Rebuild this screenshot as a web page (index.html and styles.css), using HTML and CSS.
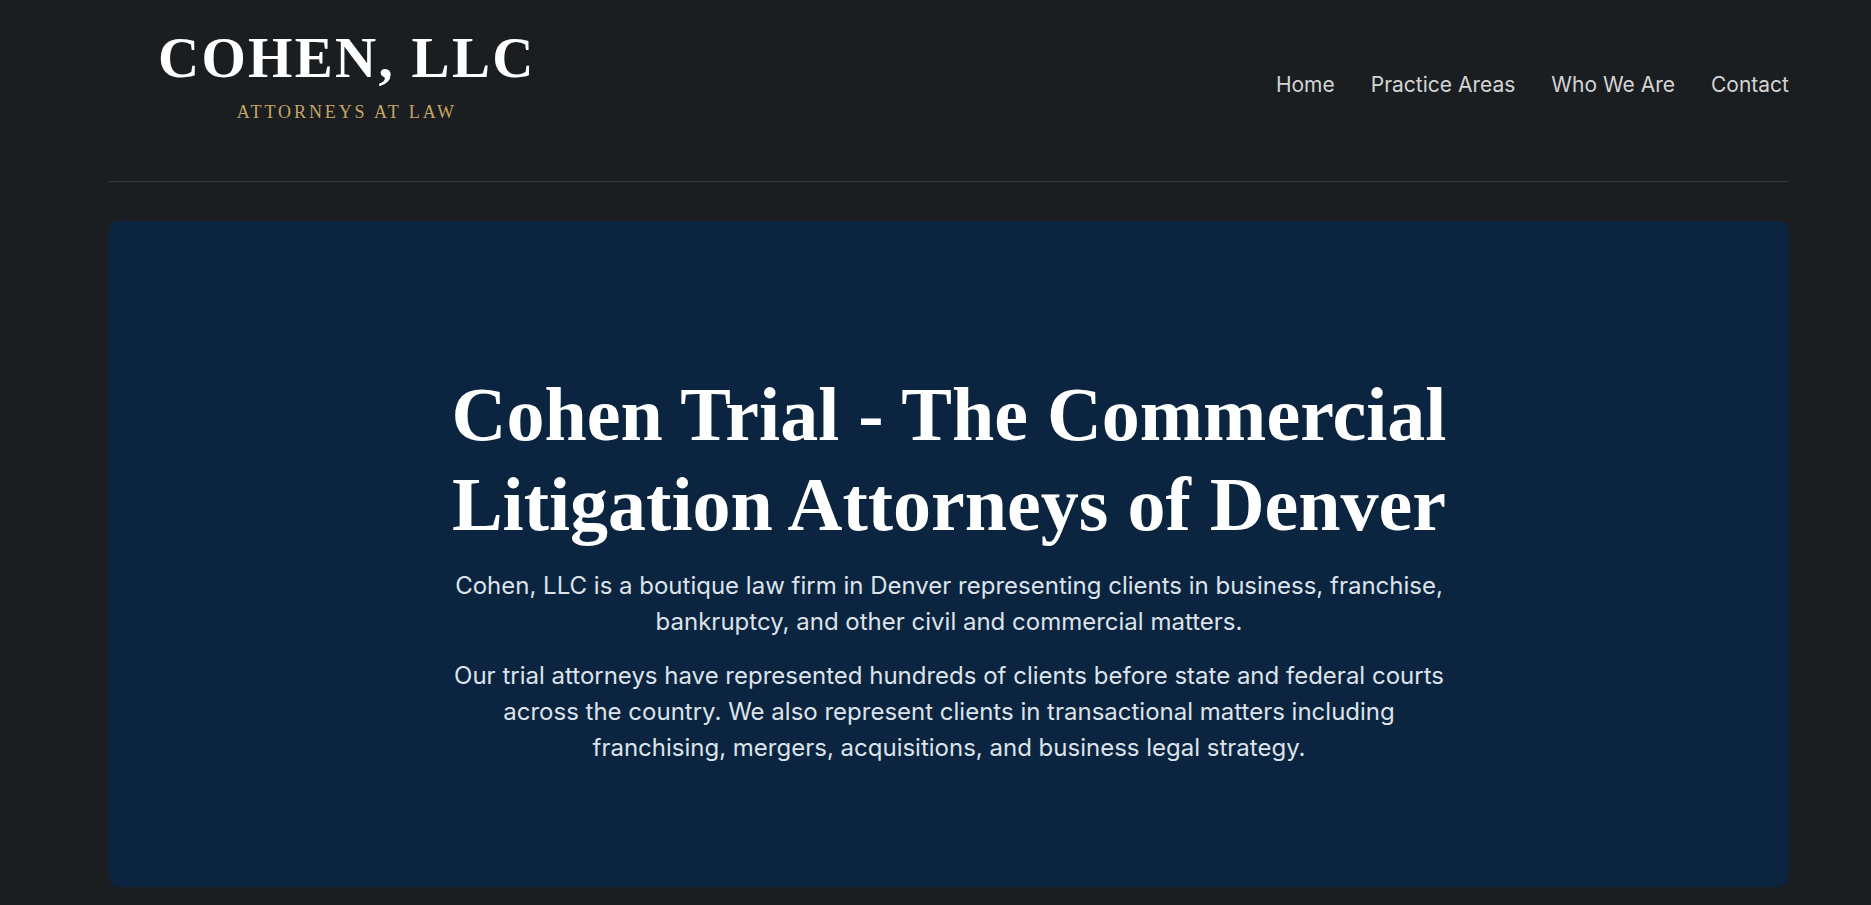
FILE: index.html
```html
<!DOCTYPE html>
<html lang="en">
<head>
  <meta charset="UTF-8" />
  <meta name="viewport" content="width=device-width, initial-scale=1" />
  <title>Cohen, LLC - Attorneys at Law</title>
  <link rel="stylesheet" href="styles.css">
</head>

<body>
  <div class="page-wrap">
    <!-- Header -->
    <header class="site-header">
      <a href="#" class="brand">
        <span class="brand-name">COHEN, LLC</span>
        <span class="brand-tag">ATTORNEYS AT LAW</span>
      </a>
      <ul class="nav-links">
        <li><a href="#">Home</a></li>
        <li><a href="#">Practice Areas</a></li>
        <li><a href="#">Who We Are</a></li>
        <li><a href="#">Contact</a></li>
      </ul>
    </header>

    <!-- Hero -->
    <section class="hero">
      <div class="hero-inner">
        <h1>Cohen Trial - The Commercial Litigation Attorneys of Denver</h1>
        <p>Cohen, LLC is a boutique law firm in Denver representing clients in business, franchise, bankruptcy, and other civil and commercial matters.</p>
        <p>Our trial attorneys have represented hundreds of clients before state and federal courts across the country. We also represent clients in transactional matters including franchising, mergers, acquisitions, and business legal strategy.</p>
      </div>
    </section>
  </div>
</body>
</html>
```

FILE: styles.css
```css
body {
  margin: 0;
  padding: 0;
  background: #1b1e21;
  font-family: 'Inter', 'Liberation Sans', sans-serif;
  color: #dde3ea;
}

.page-wrap {
  width: 1680px;
  margin-left: 109px;
}

/* Header */
.site-header {
  display: flex;
  justify-content: space-between;
  align-items: flex-start;
  height: 152px;
  padding-top: 29px;
  border-bottom: 1px solid #35383c;
}

.brand {
  display: flex;
  flex-direction: column;
  align-items: center;
  margin-left: 49px;
  text-decoration: none;
  font-family: 'Liberation Serif', serif;
}

.brand-name {
  font-size: 57px;
  line-height: 57px;
  font-weight: 700;
  letter-spacing: 2.3px;
  color: #ffffff;
}

.brand-tag {
  margin-top: 17px;
  font-size: 18px;
  line-height: 18px;
  letter-spacing: 2.9px;
  color: #c6a563;
}

.nav-links {
  display: flex;
  gap: 36px;
  list-style: none;
  margin: 43px 0 0;
  padding: 0;
}

.nav-links a {
  font-size: 21px;
  color: #d4d4d4;
  text-decoration: none;
}

/* Hero box */
.hero {
  margin-top: 39px;
  background: #0b2440;
  border-radius: 10px;
  padding: 148px 0 121px;
}

.hero-inner {
  max-width: 1040px;
  margin: 0 auto;
  text-align: center;
}

.hero h1 {
  margin: 0 0 19px;
  font-family: 'Liberation Serif', serif;
  font-size: 76px;
  line-height: 90px;
  font-weight: 700;
  color: #ffffff;
}

.hero p {
  max-width: 1000px;
  margin: 0 auto 18px;
  font-size: 24px;
  line-height: 36px;
}

.hero p:last-child {
  margin-bottom: 0;
}
```
